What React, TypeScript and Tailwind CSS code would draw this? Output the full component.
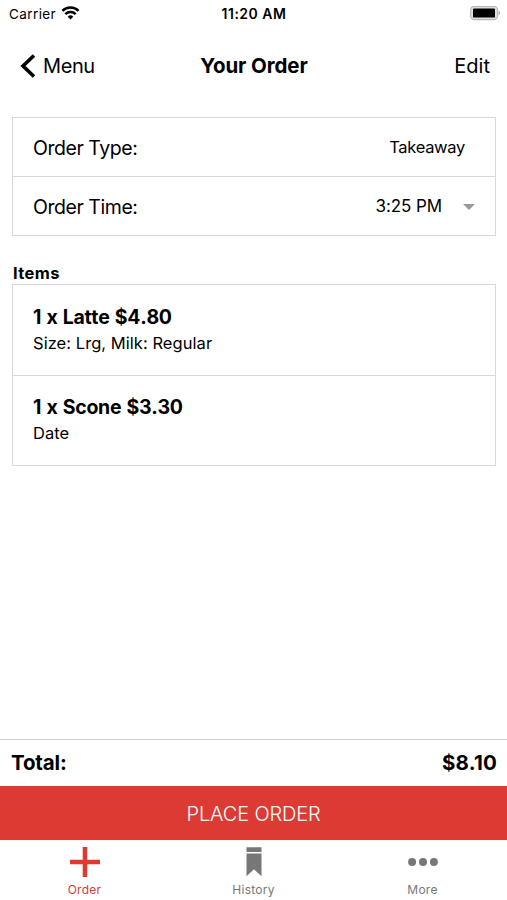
import type { ReactNode } from 'react';

interface OrderItem {
  id: number;
  title: string;
  options: string;
}

const items: OrderItem[] = [
  { id: 1, title: '1 x Latte $4.80', options: 'Size: Lrg, Milk: Regular' },
  { id: 2, title: '1 x Scone $3.30', options: 'Date' },
];

function WifiIcon() {
  return (
    <svg width="19" height="14" viewBox="0 0 18 14" fill="none" stroke="#000" strokeWidth="2.5" className="-mt-[2px]">
      <path d="M0.9 4.9a11.5 11.5 0 0 1 16.2 0" />
      <path d="M3.8 8.1a7.4 7.4 0 0 1 10.4 0" />
      <path d="M9 13.6L6.2 10.7a4 4 0 0 1 5.6 0z" fill="#000" stroke="none" />
    </svg>
  );
}

function BatteryIcon() {
  return (
    <svg width="31" height="15" viewBox="0 0 31 15" className="-mt-[1px]">
      <rect x="0.6" y="0.4" width="27" height="13.2" rx="3.6" fill="#dedede" stroke="#b8b8b8" strokeWidth="1.1" />
      <rect x="3" y="2.4" width="22" height="9.2" rx="1.2" fill="#000" />
      <path d="M28.6 4.6c2 .8 2 4 0 4.8z" fill="#b0b0b0" />
    </svg>
  );
}

function StatusBar() {
  return (
    <div className="grid h-7 grid-cols-3 items-center pl-[9px] pr-[6px] text-[13px]">
      <div className="flex items-center gap-[5px]">
        <span className="text-[13.5px] tracking-[0.4px]">Carrier</span>
        <WifiIcon />
      </div>
      <span className="pb-[2px] pr-[2px] text-center text-[14px] font-semibold tracking-[0.5px]">11:20 AM</span>
      <div className="flex justify-end">
        <BatteryIcon />
      </div>
    </div>
  );
}

function NavBar() {
  return (
    <header className="grid h-[76px] grid-cols-3 items-center pl-5 pr-[17px] text-[20px]">
      <button className="flex items-center gap-[7px] text-left">
        <svg width="16" height="24" viewBox="0 0 16 24" fill="none" stroke="#000" strokeWidth="3.6">
          <path d="M14 1.5L3 12l11 10.5" />
        </svg>
        <span className="tracking-[-0.4px]">Menu</span>
      </button>
      <h1 className="whitespace-nowrap pr-[2px] text-center text-[20.5px] font-bold tracking-[-0.1px]">Your Order</h1>
      <button className="text-right tracking-[0.05px]">Edit</button>
    </header>
  );
}

function DetailRow({ label, children }: { label: string; children: ReactNode }) {
  return (
    <div className="flex flex-1 items-center justify-between pl-5 pr-[19px] pt-[4px]">
      <span className="text-[19.5px] tracking-[-0.45px]">{label}</span>
      {children}
    </div>
  );
}

function ItemRow({ item }: { item: OrderItem }) {
  return (
    <li className="h-[90.5px] pl-5 pt-[18.5px]">
      <p className="text-[19.5px] font-bold leading-[27px] tracking-[-0.3px] [font-kerning:none] [word-spacing:1px]">
        {item.title}
      </p>
      <p className="text-[16.5px] leading-[25px] tracking-[0.05px]">{item.options}</p>
    </li>
  );
}

function Tab({ label, active, children }: { label: string; active?: boolean; children: ReactNode }) {
  return (
    <button className={`flex flex-col items-center pt-[7px] ${active ? 'text-[#dc3a33]' : 'text-[#777777]'}`}>
      {children}
      <span className="mt-[5px] text-[12px] leading-4 tracking-[0.25px]">{label}</span>
    </button>
  );
}

export default function App() {
  return (
    <div className="flex h-[900px] w-full flex-col bg-white font-['Inter',sans-serif] text-black">
      <StatusBar />
      <NavBar />

      <main className="flex-1 pl-3 pr-[11px] pt-[13px]">
        {/* Order details */}
        <section className="flex h-[119px] flex-col divide-y divide-[#d8d8d8] border border-[#d8d8d8]">
          <DetailRow label="Order Type:">
            <span className="mb-[3px] mr-[11px] text-[16.5px] tracking-[-0.3px]">Takeaway</span>
          </DetailRow>
          <DetailRow label="Order Time:">
            <div className="mb-[3px] flex items-center gap-[20px]">
              <span className="text-[17px] tracking-[-0.1px]">3:25 PM</span>
              <svg width="14" height="8" viewBox="0 0 14 8">
                <path d="M1 1h12L7 7z" fill="#999" />
              </svg>
            </div>
          </DetailRow>
        </section>

        {/* Items */}
        <h2 className="mt-[26px] pl-[1px] text-[16.5px] font-bold leading-[22px] tracking-[0.4px]">Items</h2>
        <ul className="h-[182px] divide-y divide-[#d8d8d8] border border-[#d8d8d8]">
          {items.map((item) => (
            <ItemRow key={item.id} item={item} />
          ))}
        </ul>
      </main>

      {/* Total */}
      <div className="flex h-[47px] items-center justify-between border-t border-[#d0d0d0] pl-[11px] pr-[10px] text-[20.5px] font-bold">
        <span className="tracking-[-0.15px]">Total:</span>
        <span className="tracking-[0.2px]">$8.10</span>
      </div>
      <button className="h-[54px] bg-[#dc3a33] pt-[1px] text-[20px] font-light tracking-[-0.15px] text-white">
        PLACE ORDER
      </button>

      {/* Tab bar */}
      <nav className="grid h-[60px] grid-cols-3">
        <Tab label="Order" active>
          <svg width="30" height="30" viewBox="0 0 30 30" fill="currentColor">
            <path d="M12.7 0h4.6v12.7H30v4.6H17.3V30h-4.6V17.3H0v-4.6h12.7z" />
          </svg>
        </Tab>
        <Tab label="History">
          <svg width="30" height="30" viewBox="0 0 30 30" fill="currentColor">
            <path d="M7.5.3h15v4.7h-15zM7.5 6.4h15V29.2L15 22.2l-7.5 7z" />
          </svg>
        </Tab>
        <Tab label="More">
          <svg width="30" height="30" viewBox="0 0 30 30" fill="currentColor">
            <circle cx="4.1" cy="15" r="4" />
            <circle cx="15" cy="15" r="4" />
            <circle cx="25.9" cy="15" r="4" />
          </svg>
        </Tab>
      </nav>
    </div>
  );
}
